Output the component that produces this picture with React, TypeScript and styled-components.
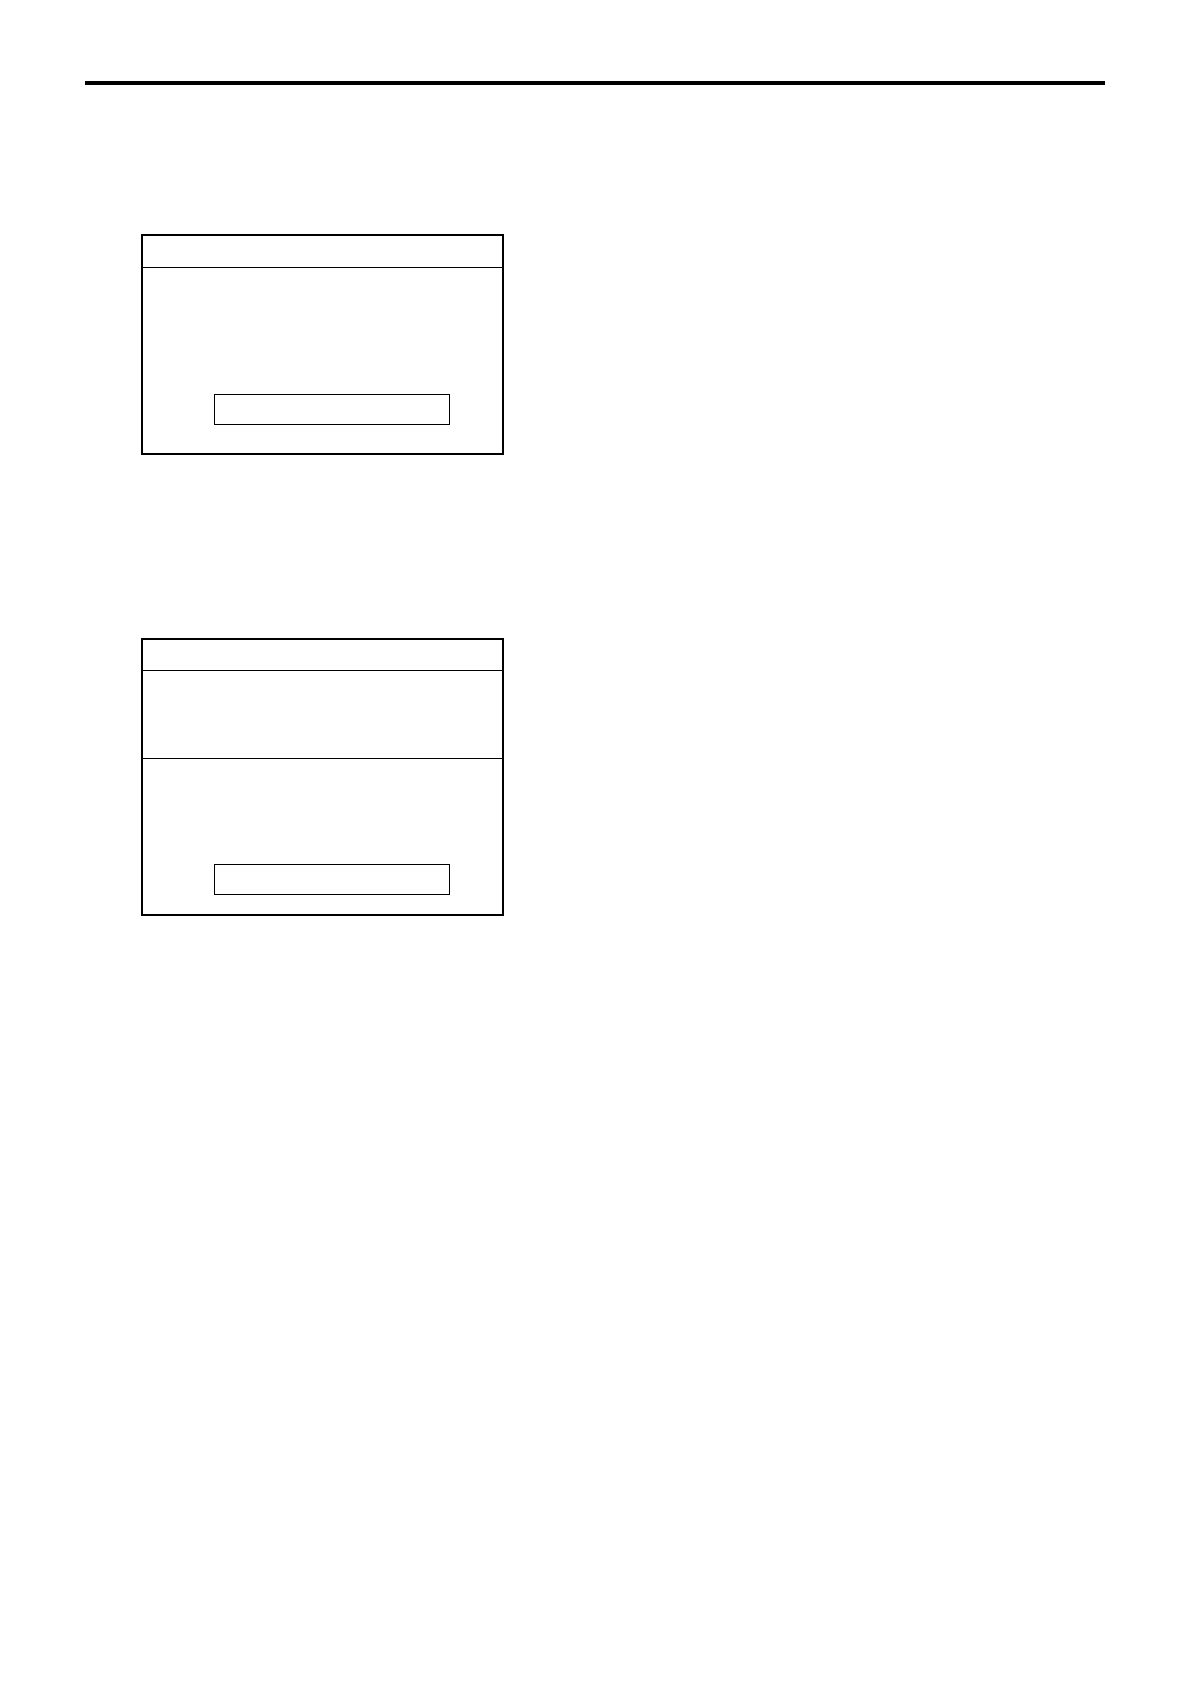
import React from "react";
import styled, { createGlobalStyle } from "styled-components";

const GlobalStyle = createGlobalStyle`
  *, *::before, *::after {
    box-sizing: border-box;
  }

  body {
    margin: 0;
    background: #ffffff;
    color: #000000;
    font-family: "Liberation Sans", Arial, sans-serif;
    font-size: 16px;
  }
`;

const Page = styled.main`
  min-height: 100vh;
  padding: 81px 85px;
`;

const Rule = styled.hr`
  height: 4px;
  margin: 0;
  border: 0;
  background: #000000;
`;

const Screens = styled.div`
  display: flex;
  flex-direction: column;
  gap: 183px;
  padding: 149px 0 0 56px;
`;

const Screen = styled.section`
  display: flex;
  flex-direction: column;
  width: 100%;
  max-width: 363px;
  border: 2px solid #000000;
`;

const Band = styled.div<{ $height: number }>`
  min-height: ${({ $height }) => $height}px;
  border-bottom: 1px solid #000000;
`;

const Body = styled.div<{ $top: number; $bottom: number }>`
  display: flex;
  padding: ${({ $top, $bottom }) => `${$top}px 52px ${$bottom}px 71px`};
`;

const Field = styled.input`
  flex: 1;
  min-width: 0;
  height: 31px;
  margin: 0;
  padding: 0 8px;
  border: 1px solid #000000;
  border-radius: 0;
  background: transparent;
  color: inherit;
  font: inherit;
`;

export default function App() {
  return (
    <>
      <GlobalStyle />
      <Page>
        <Rule />
        <Screens>
          <Screen>
            <Band $height={32} />
            <Body $top={126} $bottom={28}>
              <Field type="text" aria-label="First screen entry" />
            </Body>
          </Screen>
          <Screen>
            <Band $height={31} />
            <Band $height={88} />
            <Body $top={105} $bottom={19}>
              <Field type="text" aria-label="Second screen entry" />
            </Body>
          </Screen>
        </Screens>
      </Page>
    </>
  );
}
